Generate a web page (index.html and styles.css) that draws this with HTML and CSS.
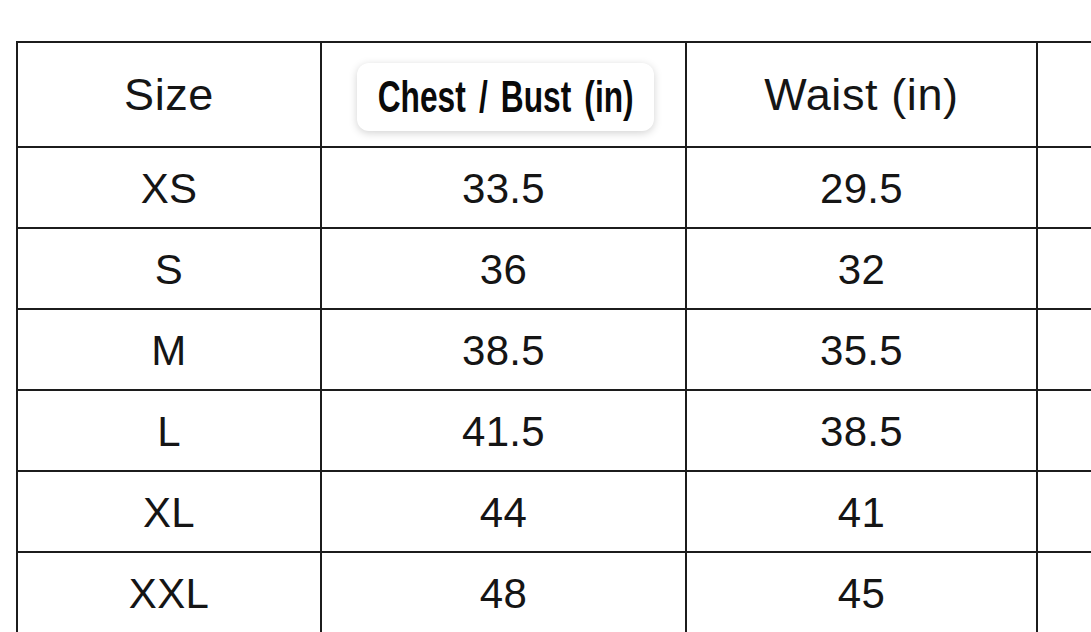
FILE: index.html
```html
<!DOCTYPE html>
<html lang="en">
<head>
<meta charset="utf-8">
<title>Size chart</title>
<link rel="stylesheet" href="styles.css">
</head>
<body>
<div class="chart">
  <div class="cell head">Size</div>
  <div class="cell head"><span class="badge"><span class="badge-text">Chest / Bust (in)</span></span></div>
  <div class="cell head">Waist (in)</div>
  <div class="cell head edge"></div>

  <div class="cell">XS</div><div class="cell">33.5</div><div class="cell">29.5</div><div class="cell edge"></div>
  <div class="cell">S</div><div class="cell">36</div><div class="cell">32</div><div class="cell edge"></div>
  <div class="cell">M</div><div class="cell">38.5</div><div class="cell">35.5</div><div class="cell edge"></div>
  <div class="cell">L</div><div class="cell">41.5</div><div class="cell">38.5</div><div class="cell edge"></div>
  <div class="cell">XL</div><div class="cell">44</div><div class="cell">41</div><div class="cell edge"></div>
  <div class="cell">XXL</div><div class="cell">48</div><div class="cell">45</div><div class="cell edge"></div>
</div>
</body>
</html>
```

FILE: styles.css
```css
html, body {
  margin: 0;
  padding: 0;
  background: #ffffff;
  overflow: hidden;
  width: 1091px;
  height: 632px;
}

body {
  font-family: "Liberation Sans", Arial, sans-serif;
  color: #151515;
}

.chart {
  margin: 41px 0 0 16px;
  display: grid;
  grid-template-columns: 304px 365px 351px 53px;
  grid-template-rows: 105px repeat(6, 81px);
  width: max-content;
  border-top: 2px solid #1c1c1c;
  border-left: 2px solid #1c1c1c;
}

.cell {
  box-sizing: border-box;
  border-right: 2px solid #1c1c1c;
  border-bottom: 2px solid #1c1c1c;
  display: flex;
  align-items: center;
  justify-content: center;
  font-size: 42px;
  letter-spacing: 0.3px;
  padding-top: 2px;
}

.cell.edge {
  border-right: none;
}

.head {
  font-size: 45px;
  letter-spacing: 0.6px;
  padding-top: 0;
}

.badge {
  display: flex;
  align-items: center;
  justify-content: center;
  width: 297px;
  height: 68px;
  margin-top: 4px;
  margin-left: 4px;
  background: #ffffff;
  border-radius: 12px;
  box-shadow: 0 2px 8px rgba(0, 0, 0, 0.18);
  overflow: hidden;
}

.badge-text {
  display: inline-block;
  white-space: nowrap;
  font-family: "Liberation Sans", Arial, sans-serif;
  font-weight: 700;
  font-size: 44px;
  letter-spacing: 0;
  word-spacing: 6px;
  color: #0a0a0a;
  transform: scaleX(0.72);
  margin-top: 1px;
}
```
